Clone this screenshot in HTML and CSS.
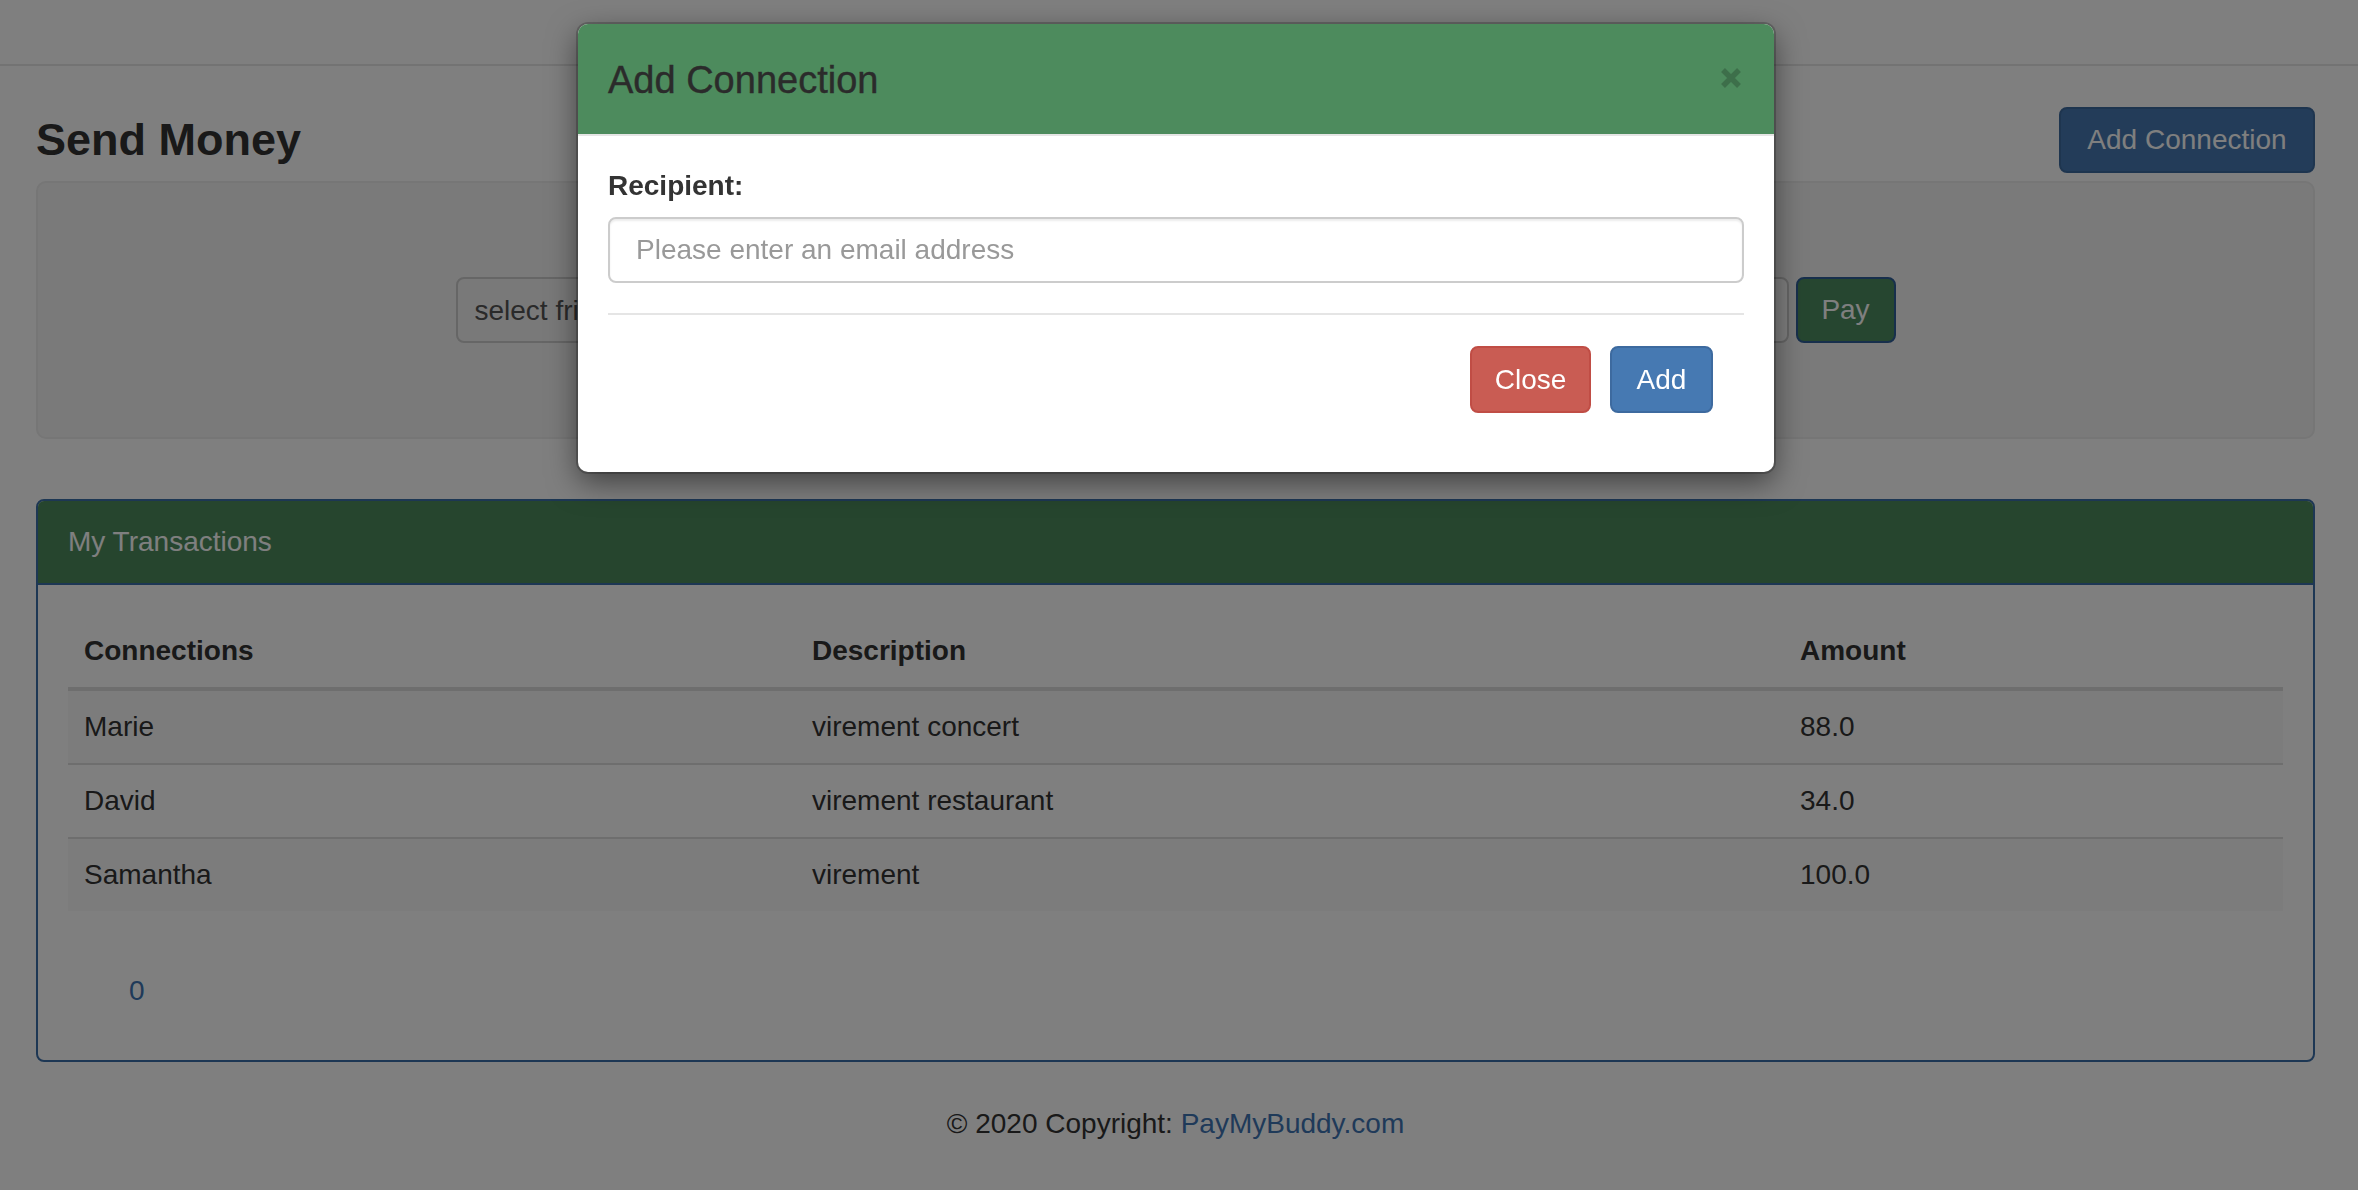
FILE: index.html
```html
<!DOCTYPE html>
<html lang="en">
<head>
<meta charset="utf-8">
<title>Send Money - PayMyBuddy</title>
<link rel="stylesheet" href="styles.css">
</head>
<body>
  <nav class="navbar"></nav>

  <main class="page">
    <div class="title-row">
      <h2 class="page-title">Send Money</h2>
      <button class="btn btn-primary btn-add-connection">Add Connection</button>
    </div>

    <form class="well">
      <select class="form-control friend-select">
        <option>select friend</option>
      </select>
      <input class="form-control amount-input" type="number" placeholder="0€">
      <button class="btn btn-pay" type="button">Pay</button>
    </form>

    <section class="panel">
      <div class="panel-heading">My Transactions</div>
      <div class="panel-body">
        <table class="table">
          <colgroup>
            <col class="col-conn">
            <col class="col-desc">
            <col class="col-amount">
          </colgroup>
          <thead>
            <tr><th>Connections</th><th>Description</th><th>Amount</th></tr>
          </thead>
          <tbody>
            <tr><td>Marie</td><td>virement concert</td><td>88.0</td></tr>
            <tr><td>David</td><td>virement restaurant</td><td>34.0</td></tr>
            <tr><td>Samantha</td><td>virement</td><td>100.0</td></tr>
          </tbody>
        </table>
        <ul class="pagination">
          <li><a href="#">0</a></li>
        </ul>
      </div>
    </section>

    <footer class="footer">© 2020 Copyright: <a href="#">PayMyBuddy.com</a></footer>
  </main>

  <div class="modal-backdrop"></div>

  <div class="modal">
    <div class="modal-content">
      <div class="modal-header">
        <h4 class="modal-title">Add Connection</h4>
        <button class="close" type="button" aria-label="Close">
          <svg width="22" height="22" viewBox="0 0 22 22"><path d="M3 3 L19 19 M19 3 L3 19" stroke="currentColor" stroke-width="5.5" fill="none"/></svg>
        </button>
      </div>
      <div class="modal-body">
        <label class="field-label" for="email">Recipient:</label>
        <input class="form-control email-input" id="email" type="email" placeholder="Please enter an email address">
        <hr class="divider">
        <div class="modal-actions">
          <button class="btn btn-danger" type="button">Close</button>
          <button class="btn btn-add" type="button">Add</button>
        </div>
      </div>
    </div>
  </div>
</body>
</html>
```

FILE: styles.css
```css
* { box-sizing: border-box; }

html, body {
  margin: 0;
  padding: 0;
}

body {
  font-family: "Liberation Sans", Arial, Helvetica, sans-serif;
  font-size: 28px;
  line-height: 40px;
  color: #333;
  background: #fff;
}

a { color: #3f74b3; text-decoration: none; }

.navbar {
  height: 66px;
  background: #fff;
  border-bottom: 2px solid #e7e7e7;
}

.page {
  padding: 0 43px 0 36px;
}

.title-row {
  display: flex;
  justify-content: space-between;
  align-items: center;
  padding-top: 41px;
  margin-bottom: 8px;
}

.page-title {
  margin: 0;
  font-size: 45px;
  line-height: 54px;
  font-weight: bold;
  color: #333;
}

.btn {
  font-family: inherit;
  font-size: 28px;
  line-height: 40px;
  border-radius: 8px;
  border: 2px solid transparent;
  color: #fff;
  cursor: pointer;
  text-align: center;
  padding: 0;
}

.btn-add-connection {
  width: 256px;
  height: 66px;
  background: #4679b2;
  border-color: #3d6a9f;
}

.well {
  display: flex;
  justify-content: center;
  align-items: center;
  margin: 0;
  padding: 94px 0;
  background: #f5f5f5;
  border: 2px solid #ececec;
  border-radius: 10px;
}

.form-control {
  height: 66px;
  font-family: inherit;
  font-size: 28px;
  color: #555;
  border: 2px solid #ccc;
  border-radius: 8px;
  background: #fff;
}

.friend-select {
  width: 560px;
  padding: 0 17px;
  background: #f2f2f2;
  appearance: none;
  -webkit-appearance: none;
  margin-right: 8px;
}

.amount-input {
  width: 765px;
  padding: 0 24px;
  margin-right: 7px;
}

.btn-pay {
  width: 100px;
  height: 66px;
  background: #4c8c60;
  border-color: #2e5f99;
}

.panel {
  margin-top: 60px;
  border: 2px solid #3b6ea8;
  border-radius: 8px;
  overflow: hidden;
}

.panel-heading {
  height: 84px;
  padding: 21px 30px;
  background: #4c8b5d;
  color: #fff;
  border-bottom: 2px solid #3b6ea8;
}

.panel-body {
  padding: 30px 30px;
}

.table {
  width: 100%;
  border-collapse: collapse;
  table-layout: fixed;
}

.col-conn { width: 728px; }
.col-desc { width: 988px; }
.col-amount { width: auto; }

.table th,
.table td {
  padding: 16px 16px;
  text-align: left;
  line-height: 40px;
}

.table th {
  font-weight: bold;
  border-bottom: 4px solid #ddd;
}

.table tbody tr + tr td {
  border-top: 2px solid #ddd;
}

.table tbody tr:nth-child(odd) td {
  background: #f9f9f9;
}

.pagination {
  list-style: none;
  margin: 48px 0 7px;
  padding: 0 0 0 37px;
}

.pagination a {
  display: inline-block;
  padding: 12px 24px;
}

.footer {
  text-align: center;
  margin-top: 42px;
  padding-bottom: 48px;
}

/* Modal overlay */
.modal-backdrop {
  position: fixed;
  inset: 0;
  background: rgba(0, 0, 0, 0.5);
}

.modal {
  position: fixed;
  inset: 0;
  padding: 24px 43px 0 37px;
}

.modal-content {
  width: 1196px;
  margin: 0 auto;
  background: #fff;
  border-radius: 10px;
  overflow: hidden;
  box-shadow: 0 10px 30px rgba(0, 0, 0, 0.5), 0 0 0 2px rgba(0, 0, 0, 0.2);
}

.modal-header {
  display: flex;
  justify-content: space-between;
  align-items: center;
  height: 112px;
  padding: 1px 32px 0 30px;
  background: #4d8b5d;
  border-bottom: 2px solid #e5e5e5;
}

.modal-title {
  margin: 0;
  font-size: 38px;
  line-height: 54px;
  font-weight: normal;
  color: #2b2b2b;
  -webkit-text-stroke: 0.4px #2b2b2b;
}

.close {
  background: none;
  border: 0;
  padding: 0;
  margin-top: -4px;
  color: rgba(0, 0, 0, 0.2);
  display: flex;
  cursor: pointer;
}

.modal-body {
  padding: 30px 30px 29px;
}

.field-label {
  display: block;
  font-weight: bold;
  margin-bottom: 11px;
}

.email-input {
  width: 100%;
  padding: 0 26px;
  box-shadow: inset 0 2px 2px rgba(0, 0, 0, 0.075);
}

.email-input::placeholder {
  color: #999;
}

.divider {
  margin: 30px 0 0;
  border: 0;
  border-top: 2px solid #e5e5e5;
}

.modal-actions {
  display: flex;
  justify-content: flex-end;
  gap: 19px;
  padding: 31px 31px 30px 0;
}

.btn-danger {
  width: 121px;
  height: 67px;
  background: #c95c53;
  border-color: #c04d45;
}

.btn-add {
  width: 103px;
  height: 67px;
  background: #4679b2;
  border-color: #3d6a9f;
}
```
